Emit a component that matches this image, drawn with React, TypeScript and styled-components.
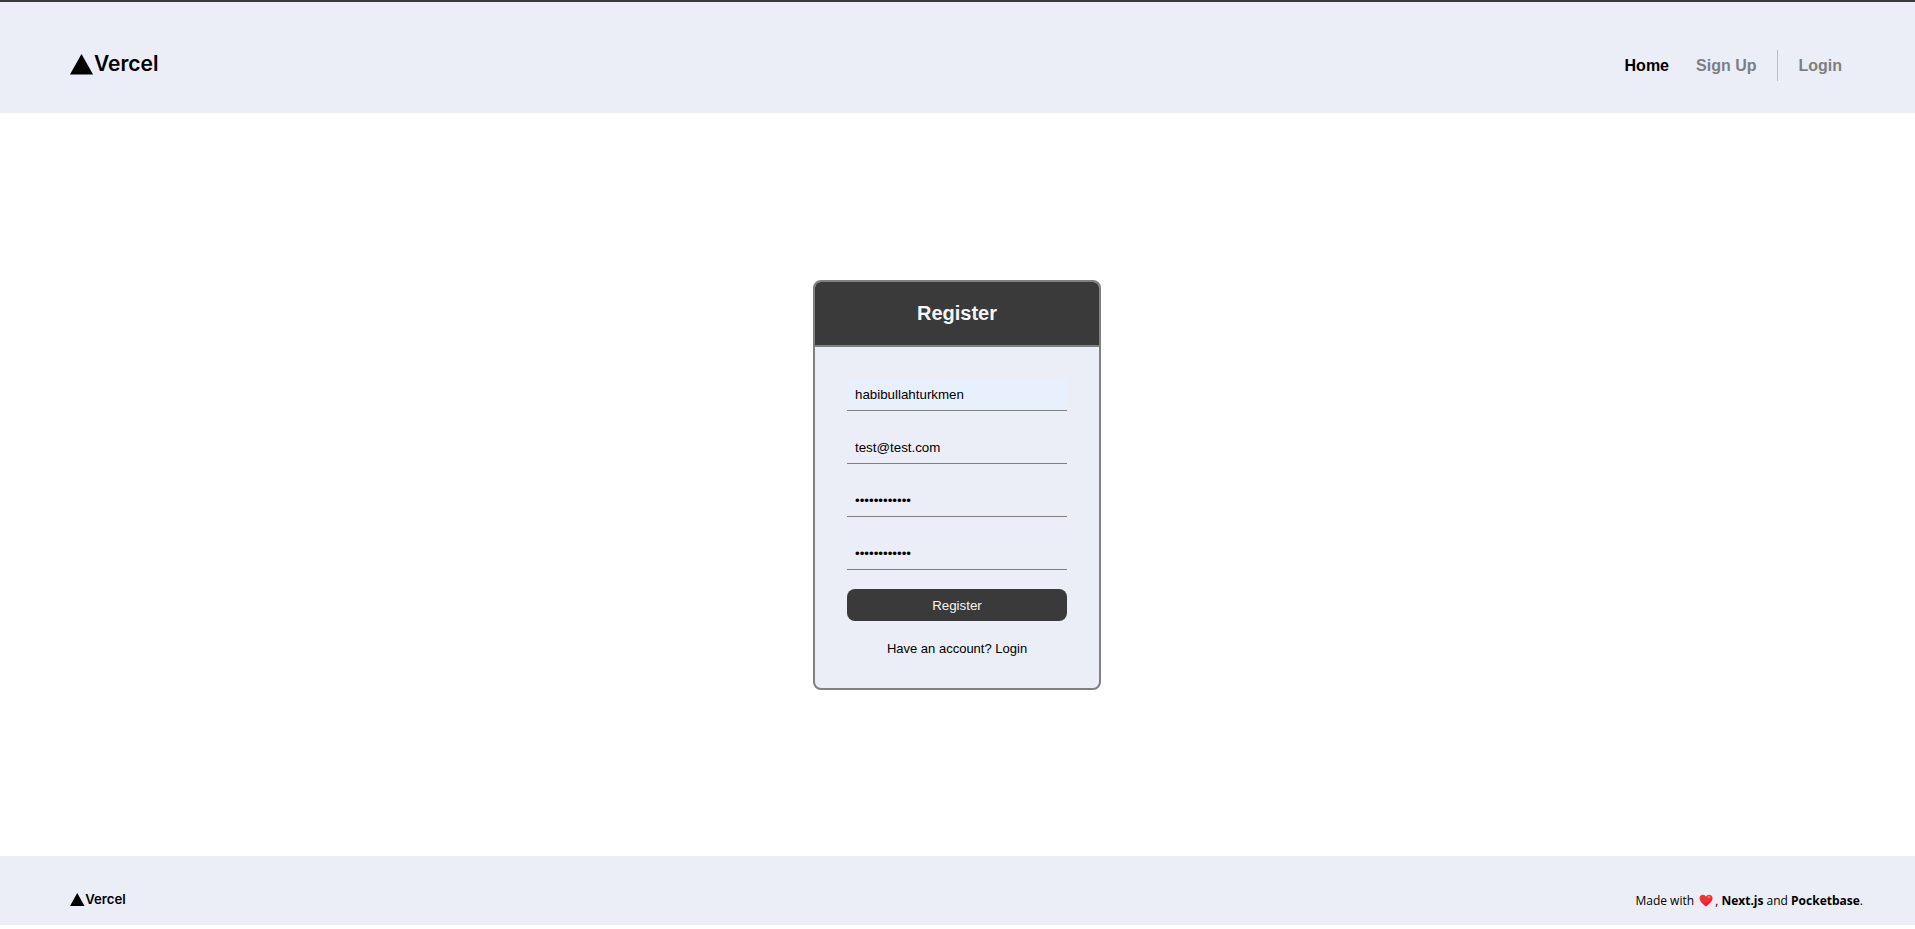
import React, { useState } from "react";
import styled, { createGlobalStyle } from "styled-components";

const ink = "#3a3a3a";
const panel = "#ebeef7";

const GlobalStyle = createGlobalStyle`
  *, *::before, *::after { box-sizing: border-box; }
  body {
    margin: 0;
    background: #fff;
    color: #000;
    font-family: "Liberation Sans", Arial, sans-serif;
  }
  a { color: inherit; text-decoration: none; }
`;

const Page = styled.div`
  display: flex;
  flex-direction: column;
  min-height: 100vh;
  padding-bottom: 4px;
  border-top: 2px solid ${ink};
`;

const Header = styled.header`
  display: flex;
  align-items: center;
  justify-content: space-between;
  padding: 48px 73px 32px 70px;
  background: ${panel};
`;

const Nav = styled.nav`
  display: flex;
  align-items: center;
  height: 31px;
  font-size: 16px;
  font-weight: 700;
`;

const NavLink = styled.a<{ $active?: boolean }>`
  color: ${(p) => (p.$active ? "#000" : "#7d7e83")};
  & + & { margin-left: 27px; }
`;

const Divider = styled.span`
  width: 1px;
  height: 31px;
  margin: 0 20px 0 21px;
  background: #bebebe;
`;

const Main = styled.main`
  flex: 1;
  display: flex;
  align-items: center;
  justify-content: center;
  padding: 1px 1px 0 0;
`;

const Card = styled.form`
  width: 288px;
  border: 2px solid #808080;
  border-radius: 8px;
  background: ${panel};
  overflow: hidden;
`;

const CardTitle = styled.h1`
  margin: 0;
  padding: 16px;
  border-bottom: 2px solid #808080;
  background: ${ink};
  color: #f5f5f5;
  font-size: 20px;
  line-height: 31px;
  text-align: center;
`;

const CardBody = styled.div`
  display: flex;
  flex-direction: column;
  gap: 19px;
  padding: 32px 32px 30px;
`;

const Fields = styled.div`
  display: flex;
  flex-direction: column;
  gap: 21px;
`;

const Field = styled.input<{ $filled?: boolean }>`
  width: 100%;
  height: 32px;
  padding: 0 8px;
  border: 0;
  border-bottom: 1px solid #808080;
  outline: 0;
  background: ${(p) => (p.$filled ? "#e8f0fe" : "transparent")};
  color: #000;
  font-family: inherit;
`;

const Submit = styled.button`
  height: 32px;
  border: 0;
  border-radius: 8px;
  background: ${ink};
  color: #f5f5f5;
  font-family: inherit;
`;

const Hint = styled.p`
  margin: 0;
  font-size: 13px;
  line-height: 18px;
  text-align: center;
`;

const Footer = styled.footer`
  display: flex;
  align-items: center;
  justify-content: space-between;
  height: 69px;
  padding: 20px 52px 0 70px;
  background: ${panel};
`;

const Credit = styled.p`
  display: flex;
  align-items: center;
  margin: 0;
  font-family: "Open Sans", sans-serif;
  font-size: 12px;
  line-height: 16px;
  white-space: pre;
`;

const Mark = styled.svg`
  display: block;
  overflow: visible;
`;

const Wordmark = styled.text`
  font-family: Inter, sans-serif;
  font-size: 21px;
  font-weight: 600;
`;

const HeartIcon = styled.svg`
  margin: 0 2px;
`;

const Logo = ({ width }: { width: number }) => (
  <Mark width={width} height={(width * 24) / 92} viewBox="0 0 92 24" role="img" aria-label="Vercel">
    <path d="M11.5 0 23 20.500H0Z" />
    <Wordmark x="24" y="17">Vercel</Wordmark>
  </Mark>
);

const Heart = () => (
  <HeartIcon width="14" height="13" viewBox="0 0 14 13" aria-label="love" role="img">
    <path d="M7 12.500C4.500 10.500.5 7.500.5 4 .5 2 2 .7 3.800.7 5.300.7 6.400 1.500 7 2.600 7.600 1.500 8.700.7 10.200.7c1.800 0 3.300 1.300 3.300 3.300 0 3.500-4 6.500-6.500 8.500Z" fill="#f8312f" />
    <path d="M13.300 3C14 6.500 10 10 7 12.500 5 11 2.500 9 1.300 7c4 3 10 1.500 12-4Z" fill="#ca0b4a" opacity=".4" />
    <ellipse cx="10" cy="3" rx="1.500" ry="1" fill="#ff7a75" />
  </HeartIcon>
);

const initial = [
  { name: "username", label: "Username", type: "text", value: "habibullahturkmen", filled: true },
  { name: "email", label: "Email", type: "email", value: "test@test.com" },
  { name: "password", label: "Password", type: "password", value: "testpassword" },
  { name: "confirm", label: "Confirm password", type: "password", value: "testpassword" },
];

export default function App() {
  const [fields, setFields] = useState(initial);
  const update = (name: string, value: string) =>
    setFields((all) => all.map((f) => (f.name === name ? { ...f, value } : f)));

  return (
    <>
      <GlobalStyle />
      <Page>
        <Header>
          <a href="#home"><Logo width={92} /></a>
          <Nav>
            <NavLink href="#home" $active>Home</NavLink>
            <NavLink href="#signup">Sign Up</NavLink>
            <Divider />
            <NavLink href="#login">Login</NavLink>
          </Nav>
        </Header>
        <Main>
          <Card onSubmit={(e) => e.preventDefault()}>
            <CardTitle>Register</CardTitle>
            <CardBody>
              <Fields>
                {fields.map((f) => (
                  <Field
                    key={f.name}
                    name={f.name}
                    type={f.type}
                    aria-label={f.label}
                    value={f.value}
                    $filled={f.filled}
                    onChange={(e) => update(f.name, e.target.value)}
                  />
                ))}
              </Fields>
              <Submit type="submit">Register</Submit>
              <Hint>Have an account? <a href="#login">Login</a></Hint>
            </CardBody>
          </Card>
        </Main>
        <Footer>
          <a href="#home"><Logo width={58} /></a>
          <Credit>
            Made with <Heart />, <strong>Next.js</strong> and <strong>Pocketbase</strong>.
          </Credit>
        </Footer>
      </Page>
    </>
  );
}
